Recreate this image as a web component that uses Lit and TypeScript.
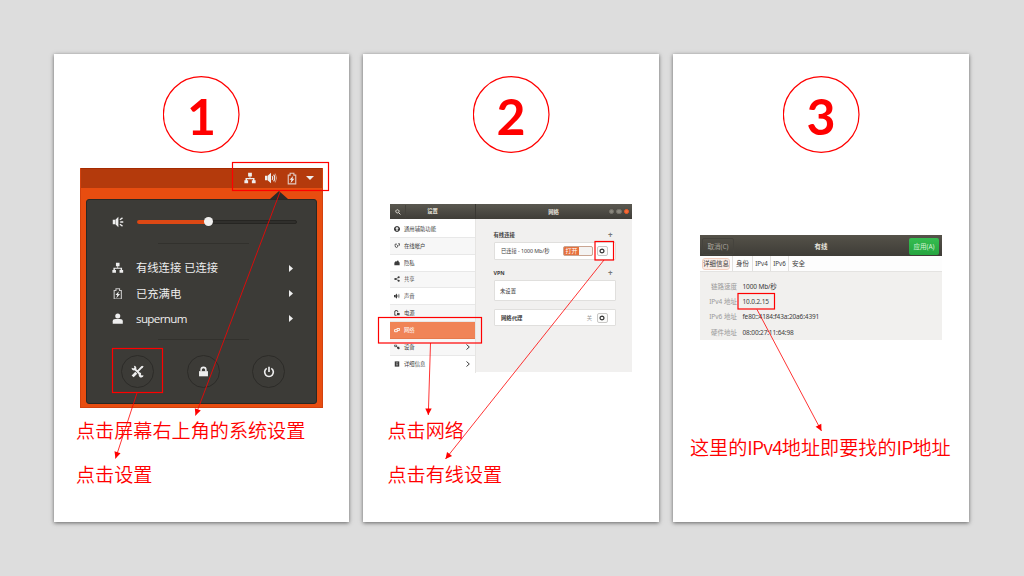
import { LitElement, html, svg, css } from "lit";
import { customElement, property } from "lit/decorators.js";

const icon = (w: number, h: number, body: unknown, box = "0 0 16 16") =>
  html`<svg width=${w} height=${h} viewBox=${box} fill="currentColor">${body}</svg>`;

const wired = svg`<path d="M5.500 1h5v5h-2v2H14v3h1.500v4h-5v-4H12V9.500H4V11h1.500v4h-5v-4H2V8h5.500V6h-2z"/>`;
const volume = svg`<path d="M0 5h3v6H0zM3.500 5L8 1v14L3.500 11z"/><path fill="none" stroke="currentColor" stroke-width="1.500" d="M9.500 5.500q1.800 2.500 0 5M11.500 3.500q3 4.500 0 9"/><path fill="none" stroke="currentColor" stroke-opacity=".5" stroke-width="1.300" d="M13.500 2q4 6 0 12"/>`;
const volumeLow = svg`<path d="M1 5h3v6H1zM4.500 5L8.500 1v14L4.500 11z"/><path fill="none" stroke="currentColor" stroke-width="1.700" d="M10.500 5L14 2.500M11 8h4M10.500 11l3.500 2.500"/>`;
const battery = svg`<path fill="none" stroke="currentColor" stroke-opacity=".8" stroke-width="1.500" d="M3 3.500h2.500V1h5v2.500H13v11.700H3z"/><path d="M9.500 4.500L4.800 9.800h2.500L6 14.200l5.200-6H8.600z"/>`;
const person = svg`<circle cx="8" cy="4.300" r="3.500"/><path d="M1 15v-3.500Q1 8.500 5 8.500h6q4 0 4 3V15z"/>`;
const lock = svg`<path fill="none" stroke="currentColor" stroke-width="2.200" d="M4.500 8V5.500a3.500 3.500 0 0 1 7 0V8"/><path d="M1.500 7.500h13V15h-13z"/>`;
const power = svg`<path fill="none" stroke="currentColor" stroke-width="2.200" d="M5 3.200a5.800 5.800 0 1 0 6 0M8 1v7"/>`;
const tools = svg`<path fill="none" stroke="currentColor" stroke-width="2.400" d="M4.200 4.500l7.600 7.500M13.800 2L8.500 7.500"/><path fill="none" stroke="currentColor" stroke-width="3.400" d="M6.500 9.500L2 14"/><path d="M3.500.8L4.300 3 3 4.300.8 3.500C.5 6.500 3.500 7.500 5.500 6.300L6.500 5C7 2.500 6 .8 3.500.8zM15.200 12.500L13 13l-1-1.200.500-2.200c-2-.300-3.500 1-3 3.200.4 2 2.200 3 4 2.300 1.200-.5 1.900-1.400 1.700-2.600zM12.300 2.600L14.500.8l1 1-1.800 2.300z"/>`;
const gear = svg`<path fill="none" stroke="currentColor" stroke-width="3.400" d="M8 3.200l4 1.300 1.300 3.500-1.300 3.500-4 1.300-4-1.300L2.700 8 4 4.500z"/>`;
const search = svg`<path fill="none" stroke="currentColor" stroke-width="2.600" d="M6.500 2a4.300 4.300 0 1 0 .010 0zM9.800 9.800L14.500 14.500"/>`;
const access = svg`<path d="M8 0a8 8 0 1 0 .010 0z"/><path fill="#fff" d="M6.500 2.500h3v2.300l2.500.7v1.300l-2.500.4.5 6H8.600L8 10l-.6 3.200H6l.5-6L4 6.800V5.500l2.500-.7z"/>`;
const accounts = svg`<path fill="none" stroke="currentColor" stroke-width="2.200" d="M8 3H3v4q0 5 4 5 4-1 3-5L8 6M11 2h4v4h-3"/>`;
const privacy = svg`<path d="M1 7l3-4 3 1 2-3 3 1 1 4h2v8H1z"/>`;
const share = svg`<path fill="none" stroke="currentColor" stroke-width="1.800" d="M12.500 3.500L4 8l8.500 4.500"/><circle cx="12.500" cy="3.500" r="2.800"/><circle cx="3.500" cy="8" r="2.800"/><circle cx="12.500" cy="12.500" r="2.800"/>`;
const energy = svg`<path fill="none" stroke="currentColor" stroke-width="2.400" d="M7 14H2V3h2V1h4v2h2v3"/><path d="M8 8h7v6H8z"/>`;
const network = svg`<path fill="none" stroke="currentColor" stroke-width="2.400" d="M7 4h8v5H9M1.500 7H9v5.500H1.500z"/>`;
const devices = svg`<path fill="none" stroke="currentColor" stroke-width="2" d="M1 3h6v4H2zM6 6l3 3"/><path d="M8 7h6l1 6-4 1-3-3z"/>`;
const info = svg`<path d="M2 1h12v14H2z"/><path fill="#fff" d="M7 3h2v2H7zM6.500 6.500H9V12H7V8h-.5z"/>`;

@customElement("step-card")
export class StepCard extends LitElement {
  @property({ type: Number }) step = 1;

  static styles = css`
    :host {
      display: flex;
      flex-direction: column;
      position: relative;
      box-sizing: border-box;
      width: 296px;
      height: 468px;
      padding-top: 22px;
      background: #fff;
      box-shadow: 0 1px 4px rgba(0, 0, 0, 0.55);
    }
    .badge {
      flex: none;
      align-self: center;
      width: 77px;
      height: 77px;
      display: grid;
      place-items: center;
      color: #f00;
      font: bold 50px/77px Lato, sans-serif;
    }
    .badge > * { grid-area: 1 / 1; }
    .badge span { height: 77px; line-height: 80px; }
    .badge svg { display: block; }
  `;

  render() {
    return html`<div class="badge">
        <svg width="77" height="77"><circle cx="38.200" cy="38.500" r="37.800" fill="none" stroke="#f00" stroke-width="1.200" /></svg>
        <span>${this.step}</span>
      </div>
      <slot></slot>`;
  }
}

@customElement("system-menu")
export class SystemMenu extends LitElement {
  static styles = css`
    :host {
      display: flex;
      flex-direction: column;
      box-sizing: border-box;
      width: 242.500px;
      height: 240px;
      background: #e84d10;
      border: solid #d2420f;
      border-width: 0 1px 1px;
      color: #eee;
      font: 11.300px/16px "Noto Sans", "Noto Sans CJK SC", sans-serif;
    }
    svg { display: block; flex: none; }
    .bar {
      display: flex;
      align-items: center;
      justify-content: flex-end;
      height: 20px;
      padding: 0 7.500px 1px 0;
      background: #b43a0c;
      border-top: 1px solid #a52b00;
      box-sizing: border-box;
    }
    .bar svg { margin-left: 9px; }
    .bar .caret { margin-left: 8px; }
    .notch {
      width: 0;
      margin: 3px 0 0 189px;
      border: solid transparent;
      border-width: 0 9px 8px;
      border-bottom-color: #2c2b28;
    }
    .panel {
      box-sizing: border-box;
      height: 205px;
      margin: 0 4.500px 0 5px;
      padding: 12.500px 0 0 25px;
      background: #3c3b37;
      border: 1px solid #292824;
      border-radius: 3px;
      display: flex;
      flex-direction: column;
    }
    .volume { display: flex; align-items: center; height: 18px; }
    .track {
      box-sizing: border-box;
      width: 160.500px;
      height: 4px;
      margin-left: 12.500px;
      border-radius: 2px;
      background: #302f2c;
      border: 1px solid #262522;
      display: flex;
      align-items: center;
    }
    .fill { width: 71px; height: 4px; flex: none; margin-left: -1px; background: #dd4814; border-radius: 2px; }
    .knob { width: 9.500px; height: 9.500px; flex: none; margin-left: -4px; border-radius: 50%; background: #f0efee; }
    .rule { width: 91px; height: 1px; background: #32312d; margin: 12px 0 12px 46px; }
    .row { display: flex; align-items: center; height: 25px; }
    .row:nth-child(2) { height: 26px; }
    .row:nth-child(3) { height: 24px; }
    .row span { flex: 1; margin-left: 12.500px; }
    .row .more { margin-right: 23.500px; }
    .rows { height: 76px; }
    .last { margin: 7px 0 15.500px 46px; }
    .name { font-size: 11.600px; letter-spacing: -0.750px; }
    .actions { display: flex; gap: 32.500px; margin-left: 9px; }
    .round {
      box-sizing: border-box;
      width: 33px;
      height: 33px;
      border-radius: 50%;
      border: 1px solid #2c2b28;
      display: flex;
      align-items: center;
      justify-content: center;
    }
    .name { font-family: "Open Sans", sans-serif; letter-spacing: -0.650px; }
  `;

  private row(glyph: unknown, label: string, cls = "") {
    return html`<div class="row">${icon(11.5, 11.5, glyph)}<span class=${cls}>${label}</span
      ><svg class="more" width="4" height="7" viewBox="0 0 4 7" fill="currentColor"><path d="M0 0l4 3.500L0 7z" /></svg></div>`;
  }

  render() {
    return html`
      <div class="bar">
        ${icon(12, 12, wired)} ${icon(12, 12, volume)} ${icon(12, 13, battery)}
        <svg class="caret" width="8" height="4" viewBox="0 0 8 4" fill="currentColor"><path d="M0 0h8L4 4z" /></svg>
      </div>
      <div class="notch"></div>
      <div class="panel">
        <div class="volume">${icon(12, 12, volumeLow)}<div class="track"><div class="fill"></div><div class="knob"></div></div></div>
        <div class="rule"></div>
        <div class="rows">
          ${this.row(wired, "有线连接 已连接")} ${this.row(battery, "已充满电")}
          ${this.row(person, "supernum", "name")}
        </div>
        <div class="rule last"></div>
        <div class="actions">
          <div class="round">${icon(13, 13, tools)}</div>
          <div class="round">${icon(11, 11, lock)}</div>
          <div class="round">${icon(12, 12, power)}</div>
        </div>
      </div>
    `;
  }
}

@customElement("settings-window")
export class SettingsWindow extends LitElement {
  static styles = css`
    :host {
      display: flex;
      flex-direction: column;
      width: 242px;
      height: 168px;
      background: #f1f0ef;
      color: #3c3c3c;
      font: 5.350px/8px "Noto Sans", "Noto Sans CJK SC", sans-serif;
    }
    svg { display: block; flex: none; }
    .head {
      display: flex;
      align-items: center;
      height: 15px;
      flex: none;
      background: linear-gradient(#5a5850, #3f3d38);
      color: #e4e0d8;
      font-weight: bold;
    }
    .find {
      box-sizing: border-box;
      width: 16px;
      height: 13px;
      padding-left: 1px;
      border-right: 1px solid #45433d;
      display: flex;
      align-items: center;
      justify-content: center;
    }
    .left { width: 53px; text-align: center; padding-right: 16px; border-right: 1px solid #3a3833; line-height: 15px; }
    .right { flex: 1; text-align: center; padding-left: 22px; }
    .dots { display: flex; gap: 2px; margin-right: 3px; }
    .dot { width: 5.300px; height: 5.300px; border-radius: 50%; background: #8a877e; box-sizing: border-box; border: 1px solid #77746b; }
    .close { background: #f46b3b; border-color: #ee5a24; }
    .body { display: flex; flex: 1; }
    .side { width: 86px; background: #fff; padding-top: 2px; box-sizing: border-box; border-right: 1px solid #e6e5e3; }
    .item {
      box-sizing: border-box;
      display: flex;
      align-items: center;
      height: 16.850px;
      padding: 0 5px 0 4px;
      gap: 4px;
      border-bottom: 1px solid #e8e8e8;
    }
    .item:nth-child(even) { background: #f7f7f7; }
    .item:last-child { border-bottom: 0; }
    .item span { flex: 1; }
    .item.on { background: #f08457; color: #fff; border-color: #e67a4c; }
    .main { width: 122px; margin-left: 17.500px; padding-top: 12px; }
    .title { display: flex; justify-content: space-between; align-items: center; font-weight: bold; height: 8px; padding-right: 3px; }
    .plus { font-size: 8px; color: #777; }
    .box {
      box-sizing: border-box;
      display: flex;
      align-items: center;
      background: #fff;
      border: 1px solid #e0dfdd;
      border-radius: 1px;
      padding: 0 7px 0 6.500px;
    }
    .box span { flex: 1; }
    .first { height: 18px; margin: 3px 0 9px; }
    .first span { letter-spacing: -0.080px; }
    .vpn { height: 21px; margin: 3px 0 8px; padding-left: 5.500px; }
    .proxy { height: 17px; font-weight: bold; }
    .switch {
      box-sizing: border-box;
      width: 29.500px;
      height: 10px;
      display: flex;
      border: 1px solid #c9a592;
      border-radius: 2px;
      background: #e6703c;
      color: #fff;
      line-height: 8px;
      margin-right: 4px;
      overflow: hidden;
    }
    .switch i { width: 15px; text-align: center; font-style: normal; font-size: 6px; }
    .switch b { flex: 1; background: #f4f3f2; }
    .off { color: #999; font-weight: normal; margin-right: 4.500px; }
    .cog {
      box-sizing: border-box;
      width: 11px;
      height: 10px;
      border: 1px solid #c8c7c5;
      border-radius: 2px;
      background: #fbfbfa;
      display: flex;
      align-items: center;
      justify-content: center;
    }
  `;

  render() {
    const items: [unknown, string, boolean?][] = [
      [access, "通用辅助功能"],
      [accounts, "在线帐户"],
      [privacy, "隐私"],
      [share, "共享"],
      [volume, "声音"],
      [energy, "电源"],
      [network, "网络"],
      [devices, "设备", true],
      [info, "详细信息", true],
    ];
    return html`
      <div class="head">
        <div class="find">${icon(6, 6, search)}</div>
        <div class="left">设置</div>
        <div class="right">网络</div>
        <div class="dots"><div class="dot"></div><div class="dot"></div><div class="dot close"></div></div>
      </div>
      <div class="body">
        <div class="side">
          ${items.map(
            ([glyph, label, more]) => html`<div class="item ${label === "网络" ? "on" : ""}">
              ${icon(6, 6, glyph)}<span>${label}</span>
              ${more
                ? html`<svg width="4" height="6" viewBox="0 0 4 6" fill="none" stroke="currentColor"><path d="M.5.5L3.300 3 .5 5.500" /></svg>`
                : ""}
            </div>`
          )}
        </div>
        <div class="main">
          <div class="title">有线连接<span class="plus">+</span></div>
          <div class="box first"><span>已连接 - 1000 Mb/秒</span><div class="switch"><i>打开</i><b></b></div><div class="cog">${icon(6, 6, gear)}</div></div>
          <div class="title">VPN<span class="plus">+</span></div>
          <div class="box vpn"><span>未设置</span></div>
          <div class="box proxy"><span>网络代理</span><div class="off">关</div><div class="cog">${icon(6, 6, gear)}</div></div>
        </div>
      </div>
    `;
  }
}

@customElement("wired-dialog")
export class WiredDialog extends LitElement {
  static styles = css`
    :host {
      display: flex;
      flex-direction: column;
      width: 242px;
      height: 105px;
      background: #f1f0ee;
      color: #3c3c3c;
      font: 6.500px/9px "Noto Sans", "Noto Sans CJK SC", sans-serif;
    }
    .head {
      display: flex;
      align-items: center;
      justify-content: space-between;
      height: 21px;
      padding: 1px 3px 0 2px;
      box-sizing: border-box;
      background: linear-gradient(#555249, #3e3c37);
      color: #e8e5de;
    }
    .head b { padding-right: 1px; }
    .cancel, .apply {
      box-sizing: border-box;
      height: 17px;
      line-height: 17px;
      text-align: center;
      border-radius: 2px;
    }
    .cancel { width: 32px; color: #a9a69e; border: 1px solid #45433d; line-height: 15px; }
    .apply { width: 30px; background: linear-gradient(#35bd50, #26a540); color: #d4f4d8; }
    .tabs { display: flex; height: 15px; background: #fdfdfd; line-height: 15px; border-bottom: 1px solid #e4e3e1; }
    .tab { box-sizing: border-box; border-right: 1px solid #e2e1df; text-align: center; }
    .tab:last-child { border: 0; }
    .tab mark { background: #fbeee8; color: inherit; outline: 1px solid #f3cdbd; border-radius: 2px; line-height: 10px; display: inline-block; }
    .en { font-size: 6.200px; }
    .grid { display: grid; grid-template-columns: 37px 1fr; column-gap: 5.500px; row-gap: 0; grid-auto-rows: 15.200px; padding-top: 7px; line-height: 15.200px; }
    .key { text-align: right; color: #999; }
    .val { letter-spacing: -0.130px; }
  `;

  render() {
    const rows = [
      ["链路速度", "1000 Mb/秒"],
      ["IPv4 地址", "10.0.2.15"],
      ["IPv6 地址", "fe80::4184:f43a:20a6:4391"],
      ["硬件地址", "08:00:27:11:64:98"],
    ];
    const tabs: [string, number][] = [["身份", 20], ["IPv4", 18], ["IPv6", 18], ["安全", 19]];
    return html`
      <div class="head"><div class="cancel">取消(C)</div><b>有线</b><div class="apply">应用(A)</div></div>
      <div class="tabs">
        <div class="tab" style="width:33px"><mark>详细信息</mark></div>
        ${tabs.map(([t, w]) => html`<div class="tab ${t.startsWith("IP") ? "en" : ""}" style="width:${w}px">${t}</div>`)}
      </div>
      <div class="grid">${rows.map(([k, v]) => html`<div class="key">${k}</div><div class="val">${v}</div>`)}</div>
    `;
  }
}

type Box = [number, number, number, number];

@customElement("app-root")
export class AppRoot extends LitElement {
  static styles = css`
    :host {
      display: flex;
      box-sizing: border-box;
      width: 1024px;
      height: 576px;
      padding: 54px 55px 54px 54px;
      gap: 14px;
      background: #ddd;
      overflow: hidden;
    }
    .one { width: 295px; }
    .caption {
      color: #f00;
      font: 350 19.130px/28px "Noto Sans CJK SC", sans-serif;
      white-space: nowrap;
    }
    .latin { letter-spacing: -0.800px; }
    .marks { position: absolute; left: 0; top: 0; width: 295px; height: 468px; overflow: visible; }
    .menu { margin: 15px 0 0 26px; }
    .c1 { margin: 8px 0 0 22px; }
    .c2 { margin: 15.500px 0 0 22px; }
    .settings { margin: 51px 0 0 27px; }
    .c3 { margin: 44px 0 0 24.500px; }
    .c4 { margin: 16px 0 0 24.500px; }
    .dialog { margin: 82px 0 0 27px; }
    .c5 { margin: 92.500px 0 0 17px; }
  `;

  private marks(boxes: Box[], arrows: Box[]) {
    return html`<svg class="marks" fill="none" stroke="#f00">
      ${boxes.map(([x, y, w, h]) => svg`<rect x=${x} y=${y} width=${w} height=${h} stroke-width="1.200"/>`)}
      ${arrows.map(([x1, y1, x2, y2]) => {
        const deg = (Math.atan2(y2 - y1, x2 - x1) * 180) / Math.PI;
        return svg`<line x1=${x1} y1=${y1} x2=${x2} y2=${y2} stroke-width=".8"/>
          <path d="M0 0L-6.500 -3.200V3.200z" fill="#f00" stroke="none" transform="translate(${x2} ${y2}) rotate(${deg})"/>`;
      })}
    </svg>`;
  }

  render() {
    return html`
      <step-card class="one" .step=${1}>
        <system-menu class="menu"></system-menu>
        <div class="caption c1">点击屏幕右上角的系统设置</div>
        <div class="caption c2">点击设置</div>
        ${this.marks(
          [[178.5, 108.5, 96, 28], [58.5, 294.5, 50, 44]],
          [[226, 138, 141.5, 361.5], [83, 339, 61.5, 404.5]]
        )}
      </step-card>
      <step-card .step=${2}>
        <settings-window class="settings"></settings-window>
        <div class="caption c3">点击网络</div>
        <div class="caption c4">点击有线设置</div>
        ${this.marks(
          [[15.5, 263.5, 103, 25.5], [232, 187.5, 18.5, 18.5]],
          [[67.5, 289, 65.3, 361], [241, 206, 82.5, 405]]
        )}
      </step-card>
      <step-card .step=${3}>
        <wired-dialog class="dialog"></wired-dialog>
        <div class="caption c5">这里的<span class="latin">IPv4</span>地址即要找的<span class="latin">IP</span>地址</div>
        ${this.marks([[65, 239.5, 36.5, 15.5]], [[84, 255.5, 148.5, 377]])}
      </step-card>
    `;
  }
}
